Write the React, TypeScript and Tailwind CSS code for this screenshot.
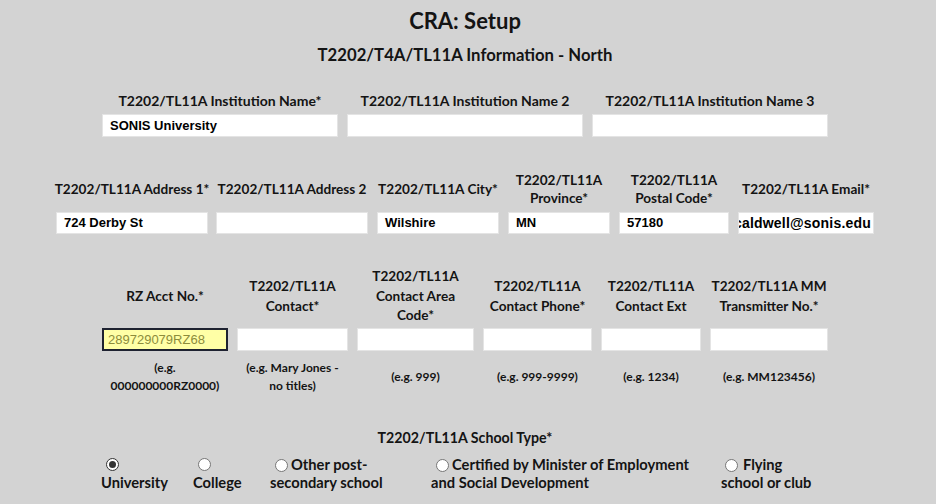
import React from "react";

const Label = ({ children }: { children: React.ReactNode }) => (
  <div className="flex justify-center">
    <span className="whitespace-nowrap text-center">{children}</span>
  </div>
);

const Box = ({ value, w, h = "h-[23px]" }: { value?: string; w: string; h?: string }) => (
  <div
    className={`${w} ${h} bg-white border border-[#e4e4e4] flex items-center pl-[7px] font-['Liberation_Sans',Arial,sans-serif] text-[13px] font-bold text-black overflow-hidden whitespace-nowrap`}
  >
    {value}
  </div>
);

const Radio = ({ checked = false }: { checked?: boolean }) =>
  checked ? (
    <span className="w-[13px] h-[13px] rounded-full border border-[#333] bg-white flex items-center justify-center shrink-0">
      <span className="w-[7px] h-[7px] rounded-full bg-[#333]" />
    </span>
  ) : (
    <span className="w-[13px] h-[13px] rounded-full border border-[#767676] bg-white shrink-0" />
  );

export default function App() {
  const row2 = [
    { label: <>T2202/TL11A Address 1*</>, w: "w-[152px]", value: "724 Derby St" },
    { label: <>T2202/TL11A Address 2</>, w: "w-[152px]", value: "" },
    { label: <>T2202/TL11A City*</>, w: "w-[122px]", value: "Wilshire" },
    { label: <>T2202/TL11A<br />Province*</>, w: "w-[102px]", value: "MN" },
    { label: <>T2202/TL11A<br />Postal Code*</>, w: "w-[110px]", value: "57180" },
  ];

  const row3 = [
    { label: <>T2202/TL11A<br />Contact*</>, w: "w-[111px]", hint: <>(e.g. Mary Jones -<br />no titles)</> },
    { label: <>T2202/TL11A<br />Contact Area<br />Code*</>, w: "w-[117px]", hint: <>(e.g. 999)</> },
    { label: <>T2202/TL11A<br />Contact Phone*</>, w: "w-[109px]", hint: <>(e.g. 999-9999)</> },
    { label: <>T2202/TL11A<br />Contact Ext</>, w: "w-[100px]", hint: <>(e.g. 1234)</> },
    { label: <>T2202/TL11A MM<br />Transmitter No.*</>, w: "w-[118px]", hint: <>(e.g. MM123456)</> },
  ];

  return (
    <div className="min-h-[504px] w-full bg-[#d3d3d3] font-['Lato',sans-serif] text-[#141414] font-bold pr-[6px] pt-[8px]">
      <div className="text-center text-[22px] leading-[26px]">CRA: Setup</div>
      <div className="text-center text-[16.7px] leading-[20px] mt-[11px]">T2202/T4A/TL11A Information - North</div>

      {/* Row 1 */}
      <div className="flex justify-center gap-[9px] mt-[27px] text-[14px] leading-[18px]">
        {[
          { label: "T2202/TL11A Institution Name*", value: "SONIS University" },
          { label: "T2202/TL11A Institution Name 2", value: "" },
          { label: "T2202/TL11A Institution Name 3", value: "" },
        ].map((c, i) => (
          <div key={i} className="w-[236px] flex flex-col">
            <Label>{c.label}</Label>
            <div className="mt-[4px]">
              <Box value={c.value} w="w-[236px]" />
            </div>
          </div>
        ))}
      </div>

      {/* Row 2 */}
      <div className="flex justify-center mt-[34px] text-[13.6px] leading-[18px]">
        <div className="flex gap-[8px]">
          {row2.map((c, i) => (
            <div key={i} className={`${c.w} flex flex-col ${i >= 2 ? "ml-[1px]" : ""}`}>
              <div className="h-[36px] flex items-center justify-center">
                <Label>{c.label}</Label>
              </div>
              <div className="mt-[5px]">
                <Box value={c.value} w={c.w} h="h-[22px]" />
              </div>
            </div>
          ))}
          <div className="w-[136px] flex flex-col ml-[1px]">
            <div className="h-[36px] flex items-center justify-center">
              <Label>T2202/TL11A Email*</Label>
            </div>
            <div className="mt-[5px] w-[136px] h-[22px] bg-white border border-[#e4e4e4] flex items-center justify-end pr-[2px] overflow-hidden whitespace-nowrap font-['Liberation_Sans',Arial,sans-serif] text-[14px] tracking-[0.2px] text-black font-bold">
              caldwell@sonis.edu
            </div>
          </div>
        </div>
      </div>

      {/* Row 3 */}
      <div className="flex justify-center mt-[33px] text-[13.6px]">
        <div className="flex gap-[8px]">
          <div className="w-[126px] flex flex-col">
            <div className="h-[59px] flex items-center justify-center leading-[19.5px]">
              <Label>RZ Acct No.*</Label>
            </div>
            <div className="mt-[2px] w-[126px] h-[23px] bg-[#ffffa6] border-2 border-[#1e2230] flex items-center pl-[4px] font-['Liberation_Sans',Arial,sans-serif] text-[13px] font-normal text-[#8c8c3c]">
              289729079RZ68
            </div>
            <div className="mt-[8px] h-[36px] flex items-center justify-center text-[12px] leading-[18px]">
              <Label>(e.g.<br />000000000RZ0000)</Label>
            </div>
          </div>
          {row3.map((c, i) => (
            <div key={i} className={`${c.w} flex flex-col ml-[1px]`}>
              <div className="h-[59px] flex items-center justify-center leading-[19.5px]">
                <Label>{c.label}</Label>
              </div>
              <div className="mt-[2px]">
                <Box w={c.w} />
              </div>
              <div className="mt-[8px] h-[36px] flex items-center justify-center text-[12px] leading-[18px]">
                <Label>{c.hint}</Label>
              </div>
            </div>
          ))}
        </div>
      </div>

      {/* School type */}
      <div className="text-center text-[14.2px] leading-[18px] mt-[34px]">T2202/TL11A School Type*</div>
      <div className="flex justify-center mt-[8px] text-[14.7px] leading-[18px]">
        <div className="flex">
          <div className="w-[92px]">
            <div className="h-[18px] flex items-center pl-[5px]">
              <Radio checked />
            </div>
            <div>University</div>
          </div>
          <div className="w-[77px]">
            <div className="h-[18px] flex items-center pl-[5px]">
              <Radio />
            </div>
            <div>College</div>
          </div>
          <div className="w-[161px]">
            <div className="flex items-center h-[18px] pl-[5px] gap-[3px]">
              <span className="mt-[3px] flex"><Radio /></span>
              <span>Other post-</span>
            </div>
            <div>secondary school</div>
          </div>
          <div className="w-[290px]">
            <div className="flex items-center h-[18px] pl-[5px] gap-[3px]">
              <span className="mt-[3px] flex"><Radio /></span>
              <span className="whitespace-nowrap">Certified by Minister of Employment</span>
            </div>
            <div>and Social Development</div>
          </div>
          <div className="w-[108px]">
            <div className="flex items-center h-[18px] pl-[4px] gap-[5px]">
              <span className="mt-[3px] flex"><Radio /></span>
              <span>Flying</span>
            </div>
            <div>school or club</div>
          </div>
        </div>
      </div>
    </div>
  );
}
